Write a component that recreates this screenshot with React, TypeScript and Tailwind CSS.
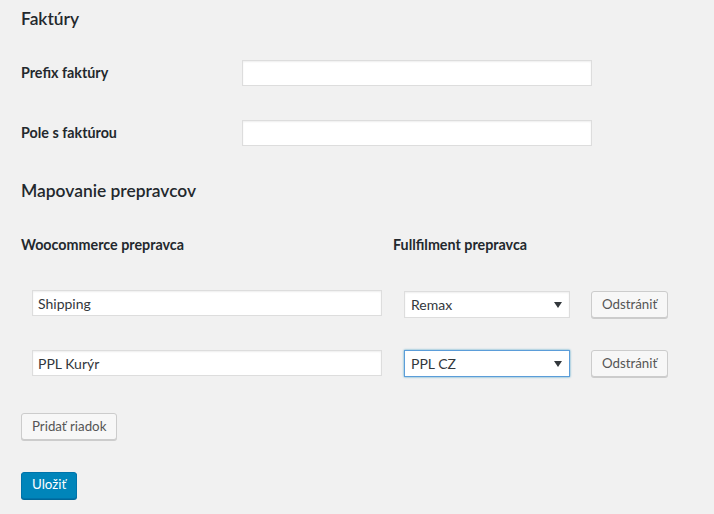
import React from "react";

const font = { fontFamily: "Lato, 'Noto Sans', sans-serif" };

function Field({ value, w = "w-[350px]" }: { value?: string; w?: string }) {
  return (
    <div
      className={`${w} h-[26px] bg-white border border-[#dddddd] shadow-[inset_0_1px_2px_rgba(0,0,0,0.07)] flex items-center px-[5px] text-[14px] text-[#32373c]`}
    >
      {value}
    </div>
  );
}

function Select({ value, focused }: { value: string; focused?: boolean }) {
  return (
    <div
      className={`w-[166px] h-[27px] bg-white border flex items-center justify-between pl-[6px] pr-[6px] text-[14px] text-[#32373c] ${
        focused
          ? "border-[#5b9dd9] shadow-[0_0_2px_rgba(30,140,190,0.8)]"
          : "border-[#dddddd] shadow-[inset_0_1px_2px_rgba(0,0,0,0.07)]"
      }`}
    >
      <span>{value}</span>
      <svg width="8" height="6" viewBox="0 0 8 6" className="mr-[1px]">
        <path d="M0 0 L8 0 L4 6 Z" fill="#32373c" />
      </svg>
    </div>
  );
}

function Button({ children }: { children: React.ReactNode }) {
  return (
    <div className="h-[27px] inline-flex items-center px-[10px] bg-[#f7f7f7] border border-[#cccccc] rounded-[3px] shadow-[0_1px_0_#cccccc] text-[13.3px] text-[#555555]">
      {children}
    </div>
  );
}

export default function App() {
  return (
    <div className="min-h-[514px] bg-[#f1f1f1] px-[21px] text-[#23282d]" style={font}>
      <div className="h-[38px] flex items-center text-[17.4px] font-semibold">Faktúry</div>

      <div className="mt-[22px] h-[26px] flex items-center">
        <div className="w-[221px] text-[14.3px] font-bold">Prefix faktúry</div>
        <Field />
      </div>
      <div className="mt-[34px] h-[26px] flex items-center">
        <div className="w-[221px] text-[14.3px] font-bold">Pole s faktúrou</div>
        <Field />
      </div>

      <div className="mt-[30px] h-[30px] flex items-center text-[17.4px] font-semibold">
        Mapovanie prepravcov
      </div>

      <div className="mt-[29px] h-[20px] flex items-center text-[14.3px] font-bold">
        <div className="w-[372px]">Woocommerce prepravca</div>
        <div>Fullfilment prepravca</div>
      </div>

      <div className="mt-[35px] h-[28px] flex items-start pl-[11px]">
        <Field value="Shipping" />
        <div className="ml-[22px] mt-[1px]">
          <Select value="Remax" />
        </div>
        <div className="ml-[21px] mt-[1px]">
          <Button>Odstrániť</Button>
        </div>
      </div>

      <div className="mt-[32px] h-[28px] flex items-start pl-[11px]">
        <Field value="PPL Kurýr" />
        <div className="ml-[22px] mt-0">
          <Select value="PPL CZ" focused />
        </div>
        <div className="ml-[21px] mt-0">
          <Button>Odstrániť</Button>
        </div>
      </div>

      <div className="mt-[35px]">
        <Button>Pridať riadok</Button>
      </div>

      <div className="mt-[31px]">
        <div className="h-[27px] inline-flex items-center px-[10px] bg-[#0085ba] border border-[#0073aa] rounded-[3px] shadow-[0_1px_0_#006799] text-[13.3px] text-white">
          Uložiť
        </div>
      </div>
    </div>
  );
}
